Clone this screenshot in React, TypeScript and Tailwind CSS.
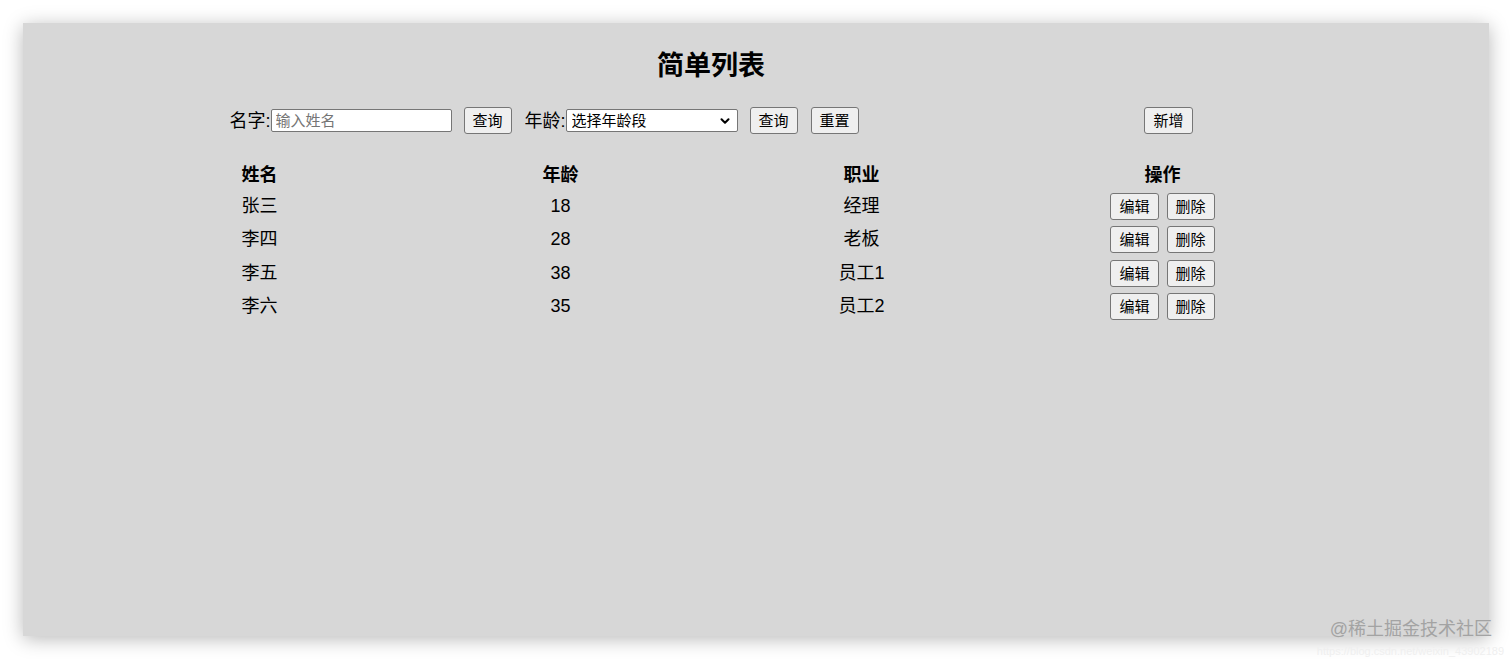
import { ChevronDown } from 'lucide-react';

const ROWS = [
  { name: '张三', age: 18, job: '经理' },
  { name: '李四', age: 28, job: '老板' },
  { name: '李五', age: 38, job: '员工1' },
  { name: '李六', age: 35, job: '员工2' },
];

function Btn({ children }: { children: React.ReactNode }) {
  return (
    <button className="h-[27px] px-[8px] text-[15px] leading-none text-black bg-[#efefef] border border-[#767676] rounded-[3px]">
      {children}
    </button>
  );
}

export default function App() {
  return (
    <div className="relative w-full h-[659px] bg-white pt-[23px] pl-[23px] overflow-hidden font-['Liberation_Sans','Noto_Sans_CJK_SC',sans-serif] text-black">
      <div className="w-[1466px] h-[613px] bg-[#d7d7d7] shadow-[0_3px_18px_rgba(0,0,0,0.28)]">
        <div className="ml-[86px] w-[1204px]">
          <h1 className="pt-[27px] text-center text-[27px] leading-[32px] font-bold">简单列表</h1>

          {/* toolbar */}
          <div className="mt-[25px] mx-auto w-[963px] flex items-center justify-between">
            <div className="flex items-center">
              <label className="text-[18px] leading-none">名字:</label>
              <input
                placeholder="输入姓名"
                className="w-[181px] h-[23px] px-[4px] text-[15px] bg-white border border-[#767676] rounded-[2px] placeholder:text-[#757575] outline-none"
              />
              <div className="ml-[12px]"><Btn>查询</Btn></div>
              <label className="ml-[13px] text-[18px] leading-none">年龄:</label>
              <div className="relative w-[172px] h-[23px]">
                <select className="appearance-none w-full h-full pl-[5px] pr-[24px] text-[15px] leading-none bg-white border border-[#767676] rounded-[2px] outline-none">
                  <option>选择年龄段</option>
                  <option>18-30</option>
                  <option>30-40</option>
                </select>
                <ChevronDown size={14} strokeWidth={3.5} className="absolute right-[6px] top-[5px] pointer-events-none" />
              </div>
              <div className="ml-[12px]"><Btn>查询</Btn></div>
              <div className="ml-[13px]"><Btn>重置</Btn></div>
            </div>
            <Btn>新增</Btn>
          </div>

          {/* table */}
          <div className="mt-[26px] text-[18px]">
            <div className="grid grid-cols-4 h-[30px] items-center text-center font-bold">
              <div>姓名</div>
              <div>年龄</div>
              <div>职业</div>
              <div>操作</div>
            </div>
            {ROWS.map((r) => (
              <div key={r.name} className="grid grid-cols-4 h-[33.3px] items-center text-center">
                <div>{r.name}</div>
                <div>{r.age}</div>
                <div>{r.job}</div>
                <div className="flex justify-center gap-[8px]">
                  <Btn>编辑</Btn>
                  <Btn>删除</Btn>
                </div>
              </div>
            ))}
          </div>
        </div>
      </div>

      {/* watermark */}
      <div className="absolute right-[20px] top-[617px] text-[18px] leading-[24px] text-[#a3a3a3]">
        @稀土掘金技术社区
      </div>
      <div className="absolute right-[8px] top-[644px] text-[11px] leading-[14px] text-[#efefef]">
        https://blog.csdn.net/weixin_43902189
      </div>
    </div>
  );
}
